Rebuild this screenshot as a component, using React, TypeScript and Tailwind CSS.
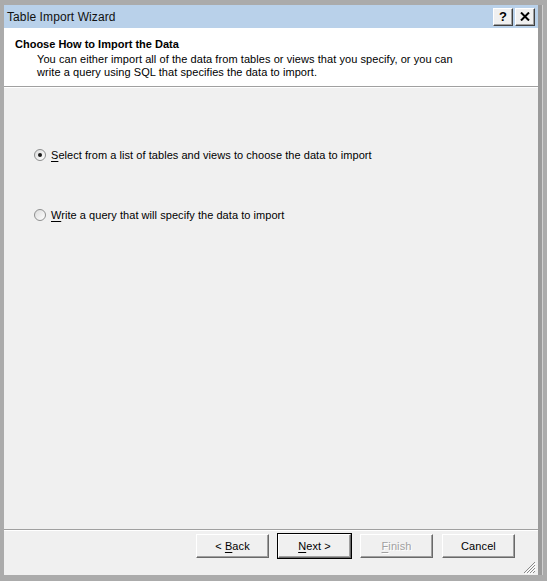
import React from 'react'

function WinButton({
  label,
  accel,
  isDefault,
  disabled,
}: {
  label: string
  accel?: number
  isDefault?: boolean
  disabled?: boolean
}) {
  const before = accel === undefined ? label : label.slice(0, accel)
  const key = accel === undefined ? '' : label[accel]
  const after = accel === undefined ? '' : label.slice(accel + 1)
  return (
    <div
      className={
        'w-[75px] h-[26px] ' + (isDefault ? 'border border-[#000]' : 'border border-transparent')
      }
    >
      <div className="w-full h-full bg-[#f0f0f0] border-t border-l border-t-white border-l-white border-r border-b border-r-[#696969] border-b-[#696969] shadow-[inset_-1px_-1px_0_#a0a0a0] flex items-center justify-center text-[11px] tracking-[0.1px]">
        <span
          className={
            disabled ? 'text-[#a0a0a0] [text-shadow:1px_1px_0_#fff]' : 'text-black'
          }
        >
          {before}
          {key && <span className="underline underline-offset-[2px]">{key}</span>}
          {after}
        </span>
      </div>
    </div>
  )
}

function Radio({ checked }: { checked?: boolean }) {
  return (
    <div className="w-[12px] h-[12px] rounded-full border border-[#8e8f8f] bg-gradient-to-br from-[#dcdcdc] to-white flex items-center justify-center shrink-0">
      {checked && <div className="w-[4px] h-[4px] rounded-full bg-[#1a1a1a]" />}
    </div>
  )
}

function TitleButton({ children }: { children: React.ReactNode }) {
  return (
    <div className="w-[20px] h-[18px] bg-[#f0f0f0] border-t border-l border-t-white border-l-white border-r border-b border-r-[#404040] border-b-[#404040] shadow-[inset_-1px_-1px_0_#a0a0a0] flex items-center justify-center">
      {children}
    </div>
  )
}

export default function App() {
  return (
    <div className="w-[547px] h-[581px] bg-[#ababab] overflow-hidden font-['Liberation_Sans',sans-serif] text-black pl-[4px] pt-[5px] flex">
      <div className="w-[534px] h-[570px] flex flex-col bg-[#f0f0f0] shrink-0">
        {/* title bar */}
        <div className="h-[23px] bg-[#b9d1ea] flex items-center pl-[3px] pr-[3px]">
          <span className="text-[12px] text-[#111] tracking-[0.1px]">Table Import Wizard</span>
          <div className="ml-auto flex gap-[2px]">
            <TitleButton>
              <span className="text-[13px] font-bold leading-none">?</span>
            </TitleButton>
            <TitleButton>
              <svg width="10" height="9" viewBox="0 0 10 9">
                <path d="M1 0.5 L9 8.5 M9 0.5 L1 8.5" stroke="#000" strokeWidth="2" />
              </svg>
            </TitleButton>
          </div>
        </div>

        {/* header */}
        <div className="h-[59px] bg-white border-b border-[#a0a0a0] pl-[11px] pt-[10px]">
          <div className="text-[11px] font-bold leading-[13px]">Choose How to Import the Data</div>
          <div className="pl-[22px] text-[11px] leading-[13px] mt-[2px] tracking-[0.07px]">
            <div>
              You can either import all of the data from tables or views that you specify, or you can
            </div>
            <div>write a query using SQL that specifies the data to import.</div>
          </div>
        </div>
        <div className="h-px bg-white" />

        {/* body */}
        <div className="flex-1 pl-[30px] pt-[60px] tracking-[0.05px]">
          <div className="flex items-center gap-[5px] h-[14px]">
            <Radio checked />
            <span className="text-[11px]">
              <span className="underline underline-offset-[2px]">S</span>elect from a list of tables
              and views to choose the data to import
            </span>
          </div>
          <div className="flex items-center gap-[5px] h-[14px] mt-[46px]">
            <Radio />
            <span className="text-[11px]">
              <span className="underline underline-offset-[2px]">W</span>rite a query that will
              specify the data to import
            </span>
          </div>
        </div>

        {/* footer */}
        <div className="border-t border-[#a0a0a0] h-[46px] relative">
          <div className="h-px bg-white" />
          <div className="flex gap-[7px] pl-[191px] pt-[2px]">
            <WinButton label="< Back" accel={2} />
            <WinButton label="Next >" accel={0} isDefault />
            <WinButton label="Finish" accel={0} disabled />
            <WinButton label="Cancel" />
          </div>
          <svg
            className="absolute right-[2px] bottom-[1px]"
            width="13"
            height="13"
            viewBox="0 0 13 13"
          >
            <path d="M12 1 L1 12 M12 4 L4 12 M12 7 L7 12 M12 10 L10 12" stroke="#8a8a8a" strokeWidth="1" />
            <path d="M13 2 L2 13 M13 5 L5 13 M13 8 L8 13" stroke="#fff" strokeWidth="1" />
          </svg>
        </div>
      </div>
      <div className="w-[4px] h-[570px] bg-[#9a9a9a] shrink-0" />
      <div className="w-px h-[570px] bg-[#d0d0d0] shrink-0" />
    </div>
  )
}
